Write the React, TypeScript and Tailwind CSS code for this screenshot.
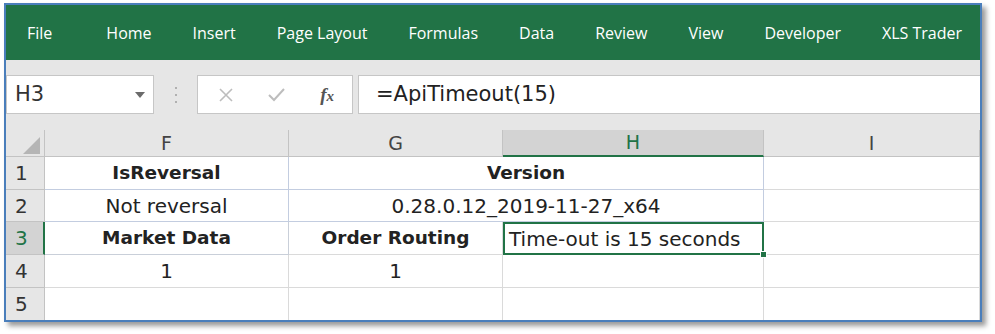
const tabs = ['File', 'Home', 'Insert', 'Page Layout', 'Formulas', 'Data', 'Review', 'View', 'Developer', 'XLS Trader'];

const cellFont = "font-['DejaVu_Sans',sans-serif]";

export default function App() {
  return (
    <div className="w-[995px] h-[334px] bg-white pl-[4px] pt-[3px]">
      <div className="w-[978px] h-[319px] border-2 border-[#4a7ebb] bg-[#e6e6e6] shadow-[4px_4px_5px_rgba(0,0,0,0.4)] flex flex-col overflow-hidden">
        {/* Ribbon tabs */}
        <div className="h-[55px] bg-[#217346] flex items-center pl-[21px] gap-[41px] text-white text-[16px] font-['Open_Sans',sans-serif]">
          {tabs.map((t, i) => (
            <span key={t} className={i === 0 ? 'mr-[13px]' : ''}>
              {t}
            </span>
          ))}
        </div>

        {/* Formula bar */}
        <div className="mt-[15px] h-[39px] flex">
          <div className="w-[148px] bg-white border border-[#c6c6c6] flex items-center justify-between pl-[8px] pr-[8px]">
            <span className={`${cellFont} text-[21px] text-[#333]`}>H3</span>
            <svg width="10" height="6" viewBox="0 0 10 6">
              <path d="M0 0 L10 0 L5 6 Z" fill="#6b6b6b" />
            </svg>
          </div>
          <div className="w-[43px] flex flex-col items-center justify-center gap-[5px]">
            <span className="w-[2px] h-[2px] bg-[#b0b0b0]" />
            <span className="w-[2px] h-[2px] bg-[#b0b0b0]" />
            <span className="w-[2px] h-[2px] bg-[#b0b0b0]" />
          </div>
          <div className="w-[156px] bg-white border border-[#c6c6c6] flex items-center justify-between pl-[21px] pr-[18px]">
            <svg width="14" height="14" viewBox="0 0 14 14">
              <path d="M1 1 L13 13 M13 1 L1 13" stroke="#bdbdbd" strokeWidth="1.6" />
            </svg>
            <svg width="17" height="14" viewBox="0 0 17 14">
              <path d="M1 7 L6 12 L16 1" stroke="#bdbdbd" strokeWidth="2" fill="none" />
            </svg>
            <span className="font-['Liberation_Serif',serif] italic font-bold text-[19px] text-[#555] leading-none">
              f<span className="text-[15px]">x</span>
            </span>
          </div>
          <div className="flex-1 ml-[5px] bg-white border-y border-l border-[#c6c6c6] flex items-center pl-[17px]">
            <span className={`${cellFont} text-[21px] text-[#222]`}>=ApiTimeout(15)</span>
          </div>
        </div>

        {/* Sheet grid */}
        <div
          className={`mt-[16px] flex-1 grid grid-cols-[39px_244px_214px_261px_1fr] grid-rows-[27px_33px_32px_33px_33px_32px] bg-white ${cellFont} text-[20px] text-[#222]`}
        >
          {/* header row */}
          <div className="bg-[#e6e6e6] border-r border-b border-[#c3c3c3] flex items-end justify-end pr-[4px] pb-[2px]">
            <svg width="17" height="17" viewBox="0 0 17 17">
              <path d="M17 0 L17 17 L0 17 Z" fill="#b5b5b5" />
            </svg>
          </div>
          <div className="bg-[#e6e6e6] border-r border-b border-[#c3c3c3] flex items-center justify-center text-[#444] text-[19px]">F</div>
          <div className="bg-[#e6e6e6] border-r border-b border-[#c3c3c3] flex items-center justify-center text-[#444] text-[19px]">G</div>
          <div className="bg-[#d3d3d3] border-r border-b-2 border-r-[#c3c3c3] border-b-[#217346] flex items-center justify-center text-[#217346] text-[19px]">H</div>
          <div className="bg-[#e6e6e6] border-r border-b border-[#c3c3c3] flex items-center justify-center text-[#444] text-[19px]">I</div>

          {/* row 1 */}
          <div className="bg-[#e6e6e6] border-r border-b border-[#c3c3c3] flex items-center pl-[9px] text-[#333]">1</div>
          <div className="border-r border-b border-[#c3cde0] flex items-center justify-center font-bold text-[18.5px]">IsReversal</div>
          <div className="col-span-2 border-r border-b border-[#c3cde0] flex items-center justify-center font-bold text-[18.5px]">Version</div>
          <div className="border-r border-b border-[#dadada]" />

          {/* row 2 */}
          <div className="bg-[#e6e6e6] border-r border-b border-[#c3c3c3] flex items-center pl-[9px] text-[#333]">2</div>
          <div className="border-r border-b border-[#c3cde0] flex items-center justify-center">Not reversal</div>
          <div className="col-span-2 border-r border-b border-[#c3cde0] flex items-center justify-center">0.28.0.12_2019-11-27_x64</div>
          <div className="border-r border-b border-[#dadada]" />

          {/* row 3 */}
          <div className="bg-[#d3d3d3] border-r-2 border-b border-r-[#217346] border-b-[#c3c3c3] flex items-center pl-[9px] text-[#217346]">3</div>
          <div className="border-r border-b border-[#c9cfd9] flex items-center justify-center font-bold text-[18.5px]">Market Data</div>
          <div className="border-r border-b border-[#dadada] flex items-center justify-center font-bold text-[18.5px]">Order Routing</div>
          <div className="relative border-2 border-[#217346] flex items-center pl-[4px]">
            Time-out is 15 seconds
            <span className="absolute right-[-5px] bottom-[-5px] w-[7px] h-[7px] bg-[#217346] border border-white" />
          </div>
          <div className="border-r border-b border-[#dadada]" />

          {/* row 4 */}
          <div className="bg-[#e6e6e6] border-r border-b border-[#c3c3c3] flex items-center pl-[9px] text-[#333]">4</div>
          <div className="border-r border-b border-[#dadada] flex items-center justify-center">1</div>
          <div className="border-r border-b border-[#dadada] flex items-center justify-center">1</div>
          <div className="border-r border-b border-[#dadada]" />
          <div className="border-r border-b border-[#dadada]" />

          {/* row 5 */}
          <div className="bg-[#e6e6e6] border-r border-[#c3c3c3] flex items-center pl-[9px] text-[#333]">5</div>
          <div className="border-r border-[#dadada]" />
          <div className="border-r border-[#dadada]" />
          <div className="border-r border-[#dadada]" />
          <div className="border-r border-[#dadada]" />
        </div>
      </div>
    </div>
  );
}
